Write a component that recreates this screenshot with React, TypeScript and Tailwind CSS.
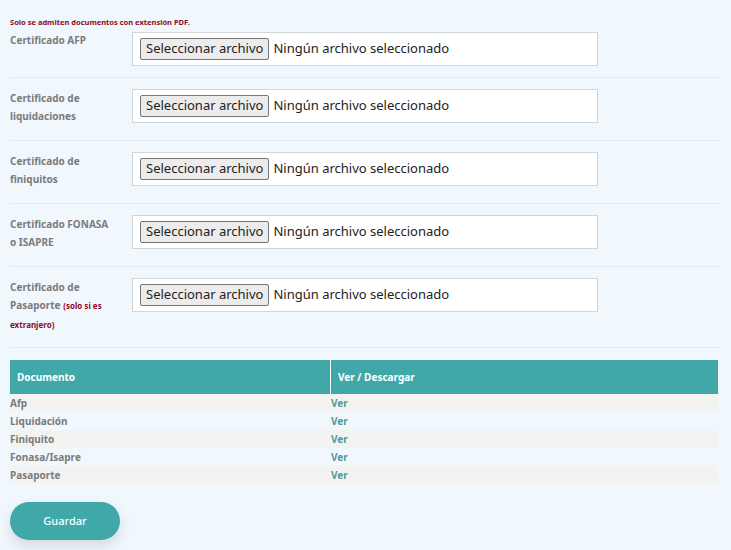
import React from "react";

type Row = {
  label: React.ReactNode;
  pad: string;
};

const rows: Row[] = [
  { label: "Certificado AFP", pad: "pt-[4px] pb-[11px]" },
  {
    label: (
      <>
        Certificado de
        <br />
        liquidaciones
      </>
    ),
    pad: "pt-[11px] pb-[15px]",
  },
  {
    label: (
      <>
        Certificado de
        <br />
        finiquitos
      </>
    ),
    pad: "pt-[11px] pb-[15px]",
  },
  {
    label: (
      <>
        Certificado FONASA
        <br />o ISAPRE
      </>
    ),
    pad: "pt-[11px] pb-[15px]",
  },
  {
    label: (
      <>
        Certificado de
        <br />
        Pasaporte{" "}
        <span className="text-[8px] text-[#8d0b1e]">(solo si es</span>
        <br />
        <span className="text-[8px] text-[#8d0b1e]">extranjero)</span>
      </>
    ),
    pad: "pt-[11px] pb-[13px]",
  },
];

const docs = ["Afp", "Liquidación", "Finiquito", "Fonasa/Isapre", "Pasaporte"];

function FileBox() {
  return (
    <div className="w-[466px] h-[34px] bg-white border border-[#cfd4d8] flex items-center pl-[7px]">
      <span className="h-[22px] px-[5px] flex items-center bg-[#ececec] border border-[#767676] rounded-[2px] text-[13px] text-[#222]">
        Seleccionar archivo
      </span>
      <span className="ml-[4px] text-[13px] text-[#222]">Ningún archivo seleccionado</span>
    </div>
  );
}

export default function App() {
  return (
    <div
      className="min-h-[550px] w-[731px] bg-[#f0f7fd] pt-[17px] pl-[10px] pr-[11px]"
      style={{ fontFamily: '"Noto Sans", "Open Sans", sans-serif' }}
    >
      <p className="text-[7.5px] font-bold text-[#8d0b1e] leading-[10px]">
        Solo se admiten documentos con extensión PDF.
      </p>

      {rows.map((row, i) => (
        <div key={i} className={`flex items-start border-b border-[#e3e9ee] ${row.pad}`}>
          <div className="w-[122px] text-[10px] font-bold leading-[18px] text-[#7b7b7b]">{row.label}</div>
          <div className={i === 0 ? "pt-[1px]" : ""}>
            <FileBox />
          </div>
        </div>
      ))}

      <div className="mt-[12px] w-[708px]">
        <div className="flex h-[34px] bg-[#41a8a9] text-white text-[10px] font-bold">
          <div className="w-[320px] pl-[7px] flex items-center">Documento</div>
          <div className="flex-1 pl-[7px] flex items-center border-l border-white">Ver / Descargar</div>
        </div>
        {docs.map((d, i) => (
          <div
            key={d}
            className={`flex h-[18px] items-center text-[10px] font-bold ${i % 2 === 0 ? "bg-[#f3f3f2]" : ""}`}
          >
            <div className="w-[321px] text-[#7b7b7b]">{d}</div>
            <div className="flex-1 text-[#4d9c9c]">Ver</div>
          </div>
        ))}
      </div>

      <button className="mt-[18px] w-[110px] h-[38px] rounded-full bg-[#41a8a9] text-white text-[11px] font-medium shadow-[0_6px_14px_rgba(0,0,0,0.12)]">
        Guardar
      </button>
    </div>
  );
}
